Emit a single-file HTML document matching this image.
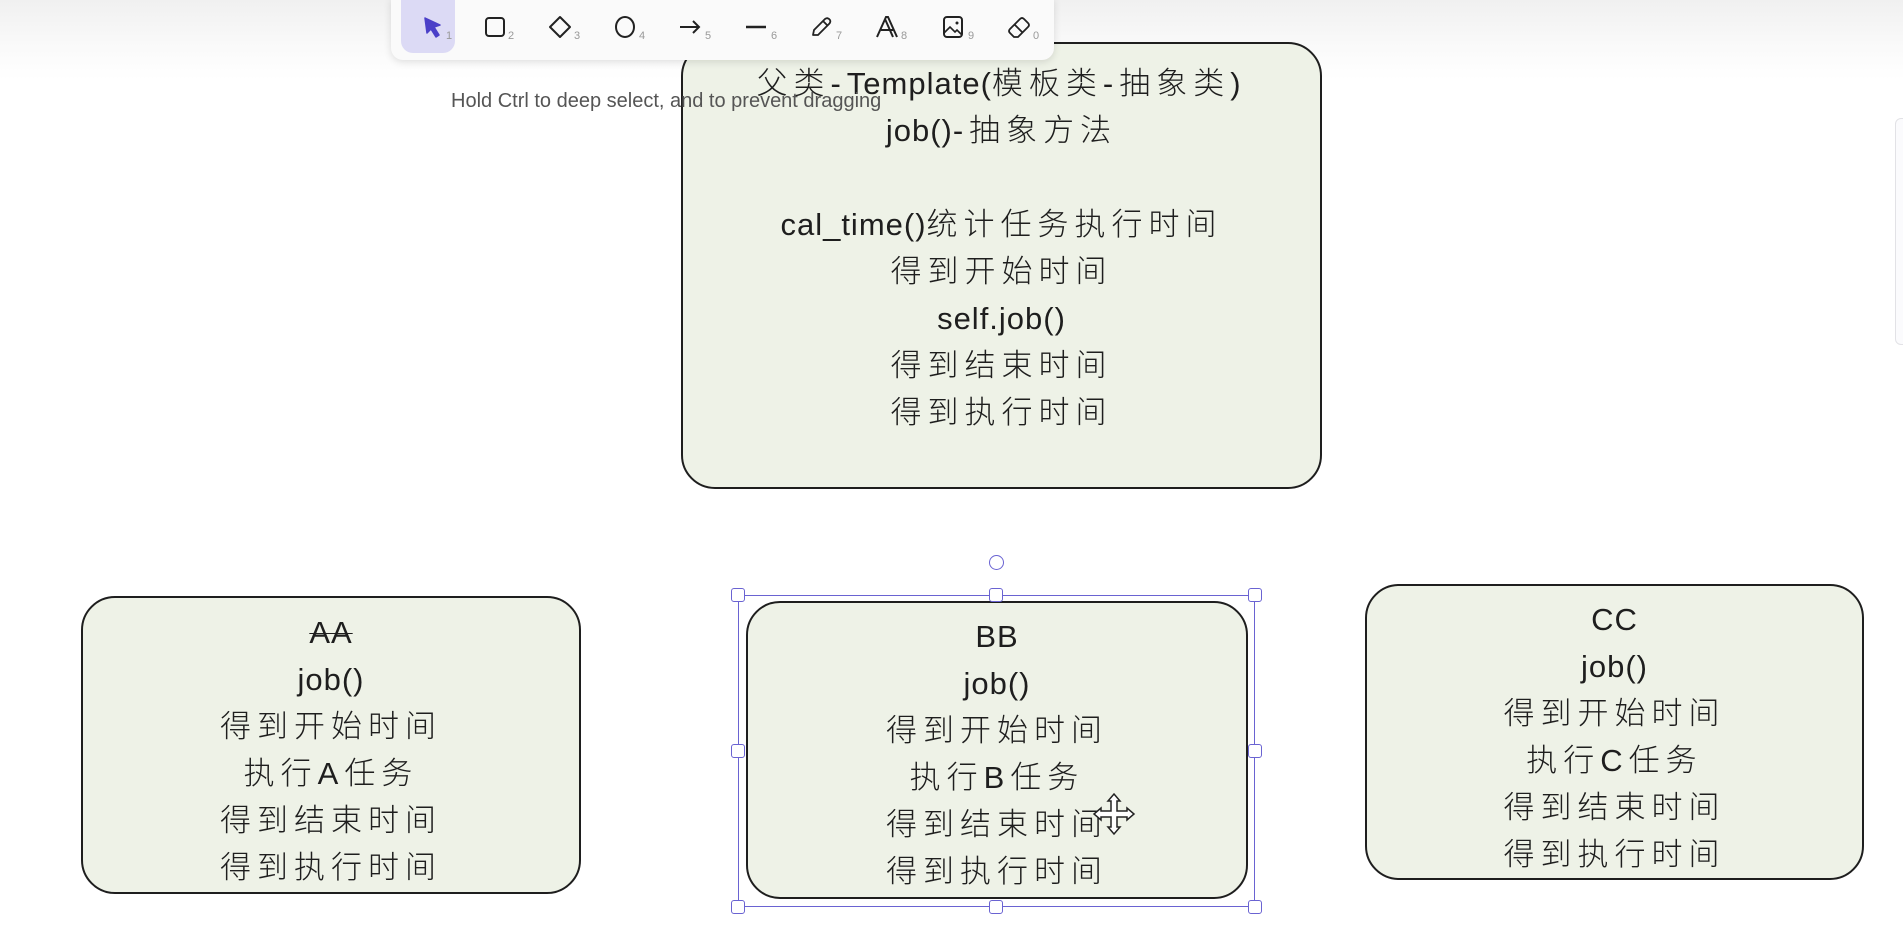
<!DOCTYPE html>
<html><head><meta charset="utf-8"><style>
html,body{margin:0;padding:0;}
body{width:1903px;height:950px;position:relative;overflow:hidden;background:#fff;font-family:"Liberation Sans","Noto Sans CJK SC",sans-serif;}
.topfade{position:absolute;left:0;top:0;width:1903px;height:80px;background:linear-gradient(#f0f0f0,#fafafa 60%,#fff);}
.box{position:absolute;background:#eef2e7;border:2.5px solid #1e1e1e;border-radius:34px;box-sizing:border-box;}
.txt{position:absolute;text-align:center;font-family:"Liberation Sans","Noto Sans CJK SC",sans-serif;font-weight:300;font-size:31px;letter-spacing:6px;color:#1e1e1e;line-height:47px;white-space:nowrap;}
.l{letter-spacing:1px;}
.tb{position:absolute;left:391px;top:-2px;width:663px;height:62px;background:#fafafa;border-radius:0 0 12px 12px;box-shadow:0 2px 8px rgba(0,0,0,.12);}
.ic{position:absolute;top:12px;width:30px;height:30px;}
.num{position:absolute;top:30px;font-size:11px;color:#999;}
.h{position:absolute;width:14px;height:14px;border:1.5px solid #6a63d2;background:#fff;border-radius:3px;box-sizing:border-box;}
</style></head><body>
<div class="topfade"></div>

<div class="box" style="left:681px;top:42px;width:641px;height:447px;"></div>
<div class="txt" style="left:681px;width:641px;top:60px;">父类-<span class="l">Template(</span>模板类-抽象类)<br><span class="l">job()</span>-抽象方法<br>&nbsp;<br><span class="l">cal_time()</span>统计任务执行时间<br>得到开始时间<br><span class="l">self.job()</span><br>得到结束时间<br>得到执行时间</div>

<div class="box" style="left:81px;top:596px;width:500px;height:298px;"></div>
<div class="txt" style="left:81px;width:500px;top:609px;"><span class="l" style="text-decoration:line-through;text-decoration-thickness:1px">AA</span><br><span class="l">job()</span><br>得到开始时间<br>执行A任务<br>得到结束时间<br>得到执行时间</div>

<div class="box" style="left:746px;top:601px;width:502px;height:298px;"></div>
<div class="txt" style="left:746px;width:502px;top:613px;"><span class="l">BB</span><br><span class="l">job()</span><br>得到开始时间<br>执行B任务<br>得到结束时间<br>得到执行时间</div>

<div class="box" style="left:1365px;top:584px;width:499px;height:296px;"></div>
<div class="txt" style="left:1365px;width:499px;top:596px;"><span class="l">CC</span><br><span class="l">job()</span><br>得到开始时间<br>执行C任务<br>得到结束时间<br>得到执行时间</div>

<!-- selection -->
<div style="position:absolute;left:738px;top:595px;width:517px;height:312px;border:1.5px solid #6a63d2;box-sizing:border-box;"></div>
<div class="h" style="left:731px;top:588px"></div><div class="h" style="left:989px;top:588px"></div><div class="h" style="left:1248px;top:588px"></div>
<div class="h" style="left:731px;top:744px"></div><div class="h" style="left:1248px;top:744px"></div>
<div class="h" style="left:731px;top:900px"></div><div class="h" style="left:989px;top:900px"></div><div class="h" style="left:1248px;top:900px"></div>
<div class="h" style="left:989px;top:555px;width:15px;height:15px;border-radius:50%"></div>
<svg style="position:absolute;left:1092px;top:792px" width="44" height="44" viewBox="0 0 44 44"><path d="M22 2 L28 9 H25 V19 H35 V16 L42 22 L35 28 V25 H25 V35 H28 L22 42 L16 35 H19 V25 H9 V28 L2 22 L9 16 V19 H19 V9 H16 Z" fill="#fff" stroke="#222" stroke-width="1.5"/></svg>

<!-- toolbar -->
<div class="tb"></div>
<div style="position:absolute;left:401px;top:0;width:54px;height:53px;background:#dcdaf5;border-radius:0 0 12px 12px;"></div>
<svg class="ic" style="left:418px" viewBox="0 0 30 30"><path d="M7 6 L22 13 L16 15 L21 23 L18 25 L13 17 L9 21 Z" fill="#4a3fc8" stroke="#4a3fc8" stroke-width="1.5" stroke-linejoin="round"/></svg><span class="num" style="left:446px">1</span>
<svg class="ic" style="left:480px" viewBox="0 0 30 30"><rect x="6" y="6" width="18" height="18" rx="3" fill="none" stroke="#222" stroke-width="2"/></svg><span class="num" style="left:508px">2</span>
<svg class="ic" style="left:545px" viewBox="0 0 30 30"><path d="M15 5 L25 15 L15 25 L5 15 Z" fill="none" stroke="#222" stroke-width="2" stroke-linejoin="round"/></svg><span class="num" style="left:574px">3</span>
<svg class="ic" style="left:610px" viewBox="0 0 30 30"><ellipse cx="15" cy="15" rx="9" ry="10" fill="none" stroke="#222" stroke-width="2"/></svg><span class="num" style="left:639px">4</span>
<svg class="ic" style="left:675px" viewBox="0 0 30 30"><path d="M5 15 H24 M18 9 L24 15 L18 21" fill="none" stroke="#222" stroke-width="2"/></svg><span class="num" style="left:705px">5</span>
<svg class="ic" style="left:741px" viewBox="0 0 30 30"><path d="M5 15 H25" stroke="#222" stroke-width="2.5"/></svg><span class="num" style="left:771px">6</span>
<svg class="ic" style="left:806px" viewBox="0 0 30 30"><path d="M7 23 L8 18 L19 7 Q22 5 24 8 Q25 10 23 12 L12 23 Z M17 9 L22 14" fill="none" stroke="#222" stroke-width="1.8" stroke-linejoin="round"/></svg><span class="num" style="left:836px">7</span>
<svg class="ic" style="left:872px" viewBox="0 0 30 30"><path d="M5 25 L14 5 H16 L25 25 M9 18 H21 M13 7 L21 25" fill="none" stroke="#222" stroke-width="2"/></svg><span class="num" style="left:901px">8</span>
<svg class="ic" style="left:938px" viewBox="0 0 30 30"><rect x="6" y="5" width="18" height="20" rx="3" fill="none" stroke="#222" stroke-width="2"/><path d="M6 21 L12 15 L17 20 L19 18 L24 23" fill="none" stroke="#222" stroke-width="1.6"/><circle cx="19" cy="11" r="1.5" fill="#222"/></svg><span class="num" style="left:968px">9</span>
<svg class="ic" style="left:1004px" viewBox="0 0 30 30"><path d="M6 17 L16 7 Q18 5 20 7 L24 11 Q26 13 24 15 L14 25 H10 L6 21 Q4 19 6 17 Z M11 13 L19 21" fill="none" stroke="#222" stroke-width="1.8" stroke-linejoin="round"/></svg><span class="num" style="left:1033px">0</span>

<div style="position:absolute;left:451px;top:90px;font-size:20px;color:#555;font-family:'Liberation Sans',sans-serif;">Hold Ctrl to deep select, and to prevent dragging</div>

<div style="position:absolute;left:1895px;top:118px;width:12px;height:225px;border:1px solid #e2e2e6;border-radius:6px;background:#fbfbfd"></div>
</body></html>
